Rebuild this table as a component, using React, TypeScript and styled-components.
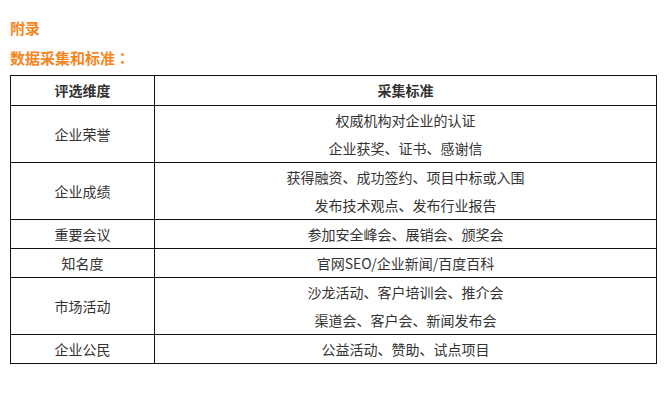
import React from 'react'
import styled, { createGlobalStyle } from 'styled-components'

const GlobalStyle = createGlobalStyle`
    html, body {
        margin: 0;
        padding: 0;
        background: #fff;
    }
    body {
        font-family: "Noto Sans CJK SC", "Liberation Sans", sans-serif;
    }
`

const Page = styled.div`
    display: flex;
    flex-direction: column;
    padding: 13px 0 0 10px;
    width: 647px;
`

const Heading = styled.div`
    color: #f5861f;
    font-size: 15px;
    font-weight: bold;
    line-height: 30px;
    height: 30px;
`

/* centred full-width colon, as in the original rendering */
const Colon = styled.span`
    font-family: "Noto Sans CJK TC", "Noto Sans CJK SC", sans-serif;
`

const Table = styled.table`
    margin-top: 2px;
    width: 647px;
    border-collapse: collapse;
    table-layout: fixed;
    color: #333;
    font-size: 14px;
`

const HeadCell = styled.th`
    border: 1px solid #111;
    padding: 0;
    height: 29px;
    line-height: 29px;
    font-weight: bold;
    text-align: center;
`

const Cell = styled.td`
    border: 1px solid #111;
    padding: 0;
    text-align: center;
    vertical-align: middle;
`

const Line = styled.p`
    margin: 0;
    height: 28px;
    line-height: 28px;
`

const rows: { name: string; items: string[] }[] = [
    { name: '企业荣誉', items: ['权威机构对企业的认证', '企业获奖、证书、感谢信'] },
    { name: '企业成绩', items: ['获得融资、成功签约、项目中标或入围', '发布技术观点、发布行业报告'] },
    { name: '重要会议', items: ['参加安全峰会、展销会、颁奖会'] },
    { name: '知名度', items: ['官网SEO/企业新闻/百度百科'] },
    { name: '市场活动', items: ['沙龙活动、客户培训会、推介会', '渠道会、客户会、新闻发布会'] },
    { name: '企业公民', items: ['公益活动、赞助、试点项目'] },
]

const App = () => {
    return (
        <>
            <GlobalStyle />
            <Page>
                <Heading>附录</Heading>
                <Heading>数据采集和标准<Colon>：</Colon></Heading>
                <Table>
                    <colgroup>
                        <col style={{ width: '144px' }} />
                        <col />
                    </colgroup>
                    <thead>
                        <tr>
                            <HeadCell>评选维度</HeadCell>
                            <HeadCell>采集标准</HeadCell>
                        </tr>
                    </thead>
                    <tbody>
                        {rows.map(row => (
                            <tr key={row.name}>
                                <Cell>{row.name}</Cell>
                                <Cell>
                                    {row.items.map(item => (
                                        <Line key={item}>{item}</Line>
                                    ))}
                                </Cell>
                            </tr>
                        ))}
                    </tbody>
                </Table>
            </Page>
        </>
    )
}

export default App
